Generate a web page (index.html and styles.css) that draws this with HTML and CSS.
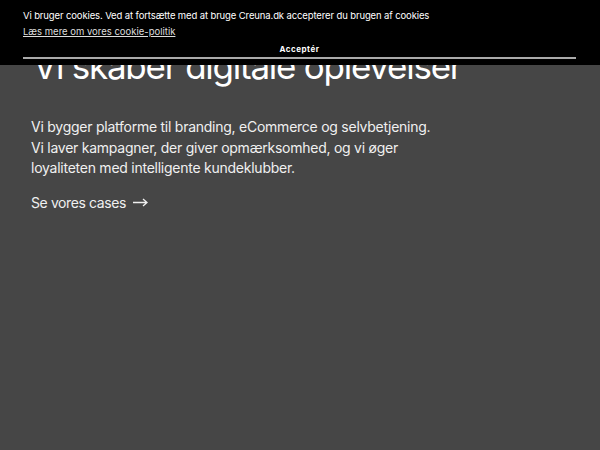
FILE: index.html
```
<!DOCTYPE html>
<html lang="da">
<head>
<meta charset="utf-8">
<link rel="stylesheet" href="styles.css">
</head>
<body>
<main class="hero">
  <h1 class="hero-title">Vi skaber digitale oplevelser</h1>
  <p class="hero-text">Vi bygger platforme til branding, eCommerce og selvbetjening.<br>Vi laver kampagner, der giver opmærksomhed, og vi øger<br>loyaliteten med intelligente kundeklubber.</p>
  <a class="hero-link" href="#">Se vores cases <svg class="arrow" width="15" height="9" viewBox="0 0 15 9"><path d="M0 4.5H14M10 1L14 4.5L10 8" fill="none" stroke="#f0f0f0" stroke-width="1.3"/></svg></a>
</main>
<div class="cookie">
  <p class="cookie-text">Vi bruger cookies. Ved at fortsætte med at bruge Creuna.dk accepterer du brugen af cookies</p>
  <a class="cookie-link" href="#">Læs mere om vores cookie-politik</a>
  <button class="cookie-btn">Acceptér</button>
</div>
</body>
</html>
```
FILE: styles.css
```
html, body {
  margin: 0;
  padding: 0;
  height: 100%;
}
body {
  background: #464646;
  font-family: Inter, "Liberation Sans", sans-serif;
  color: #fff;
  overflow: hidden;
}
.hero {
  padding: 41px 30px 0 31px;
}
.hero-title {
  margin: 0 0 0 2px;
  font-size: 35px;
  font-weight: 400;
  line-height: 50px;
  letter-spacing: -1.25px;
}
.hero-text {
  margin: 26px 0 0;
  font-size: 14px;
  line-height: 20.5px;
  letter-spacing: -0.25px;
  color: #f0f0f0;
}
.hero-link {
  display: inline-flex;
  align-items: center;
  margin-top: 15px;
  font-size: 14px;
  letter-spacing: -0.4px;
  color: #f0f0f0;
  text-decoration: none;
}
.arrow {
  margin-left: 7px;
}
.cookie {
  position: fixed;
  top: 0;
  left: 0;
  right: 0;
  height: 65px;
  background: #000;
  padding: 0 24px 0 23px;
  box-sizing: border-box;
  display: flex;
  flex-direction: column;
}
.cookie-text {
  margin: 10px 0 0;
  font-size: 9.5px;
  line-height: 12px;
  letter-spacing: -0.12px;
  color: #fff;
}
.cookie-link {
  margin-top: 4px;
  font-size: 9.5px;
  line-height: 12px;
  color: #ddd;
  align-self: flex-start;
}
.cookie-btn {
  margin-top: 4px;
  background: none;
  border: none;
  border-bottom: 2px solid #aaa;
  color: #fff;
  font-family: inherit;
  font-size: 8px;
  font-weight: 700;
  letter-spacing: 0.5px;
  padding: 2px 0 3px;
  cursor: pointer;
}
```
